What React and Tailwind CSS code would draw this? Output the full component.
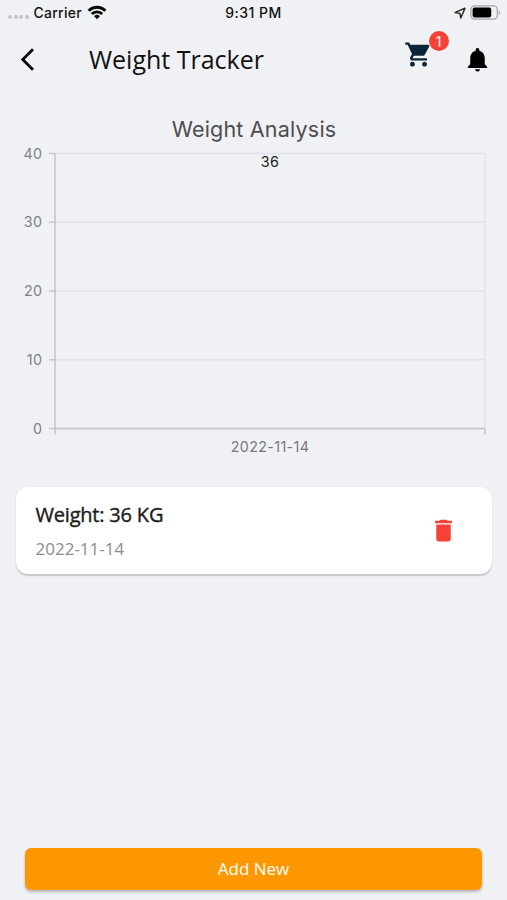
import { MdArrowBackIosNew, MdDelete, MdNotifications, MdShoppingCart } from "react-icons/md";

const entries = [{ id: 1, date: "2022-11-14", weight: 36 }];
const cartCount = 1;

function StatusBar() {
  return (
    <div className="grid h-[25px] grid-cols-3 items-center font-['Inter',sans-serif] text-[14px] font-medium text-[#111]">
      <div className="flex items-center pl-2">
        <div className="mt-2 flex gap-[1.5px]">
          {[0, 1, 2, 3].map((dot) => (
            <span key={dot} className="h-[4px] w-[4px] rounded-full bg-[#c3c4c7]" />
          ))}
        </div>
        <span className="ml-[5px] tracking-[0.25px]">Carrier</span>
        <svg className="ml-[5px] h-[15px] w-5" viewBox="0 0 20 15" fill="none" stroke="#0a0a0a" strokeWidth="2.9">
          <path d="M1.6 5.7a12 12 0 0 1 16.8 0" />
          <path d="M4.8 9a7.4 7.4 0 0 1 10.4 0" />
          <path d="M10 14.2 7.1 11.3a4.1 4.1 0 0 1 5.8 0z" fill="#0a0a0a" stroke="none" />
        </svg>
      </div>
      <div className="text-center tracking-[0.45px]">9:31 PM</div>
      <div className="flex items-center justify-end pr-[6px]">
        <svg className="h-3 w-3" viewBox="0 0 12 12" fill="none" stroke="#222" strokeWidth="1.4" strokeLinejoin="round">
          <path d="M1 5.6 11 1.2 6.8 11 5.9 6.4z" />
        </svg>
        <svg className="ml-1 h-[15px] w-[31px]" viewBox="0 0 31 15">
          <rect x="0.9" y="0.9" width="26.4" height="13.2" rx="3.6" fill="none" stroke="#a5a6a9" strokeWidth="1.3" />
          <rect x="2.6" y="2.6" width="18.6" height="9.8" rx="1.8" fill="#000" />
          <path d="M28.8 5.2c1.8.7 1.8 3.9 0 4.6z" fill="#a5a6a9" />
        </svg>
      </div>
    </div>
  );
}

function Header() {
  return (
    <header className="flex h-[69px] items-center pr-[15px] pl-[14px]">
      <button>
        <MdArrowBackIosNew className="h-[27px] w-[27px] text-[#0a0a0a]" />
      </button>
      <h1 className="mt-px ml-[48px] font-['Open_Sans',sans-serif] text-[25px] text-[#111]">Weight Tracker</h1>
      <button className="relative ml-auto">
        <MdShoppingCart className="-mt-[10px] h-[29px] w-[29px] text-[#0c2338]" />
        <span className="absolute -top-[19px] left-[24.5px] flex h-5 w-5 items-center justify-center rounded-full bg-[#f44336] font-['Inter',sans-serif] text-[14px] text-white">
          {cartCount}
        </span>
      </button>
      <button className="ml-[30px]">
        <MdNotifications className="h-[29px] w-[29px] text-black" />
      </button>
    </header>
  );
}

function WeightChart({ data }) {
  const left = 55;
  const right = 485;
  const top = 59.5;
  const bottom = 334.5;
  const max = 40;
  const y = (value) => bottom - (value / max) * (bottom - top);
  const step = (right - left) / data.length;

  return (
    <svg className="block h-[376px] w-full font-['Inter',sans-serif]" viewBox="0 0 507 376">
      <text x="254" y="42.5" textAnchor="middle" fontSize="21.5" letterSpacing="0.2" fill="#4d4d50">
        Weight Analysis
      </text>
      {[0, 10, 20, 30, 40].map((tick) => (
        <g key={tick}>
          <line x1={left} x2={right} y1={y(tick)} y2={y(tick)} stroke="#e2e3e6" strokeWidth="1.3" />
          <line x1={left - 6} x2={left} y1={y(tick)} y2={y(tick)} stroke="#c4c5c9" strokeWidth="1.4" />
          <text x="42.3" y={y(tick) + 5} textAnchor="end" fontSize="14.3" letterSpacing="0.3" fill="#808184">
            {tick}
          </text>
        </g>
      ))}
      <line x1={right} x2={right} y1={top} y2={bottom} stroke="#e2e3e6" strokeWidth="1.3" />
      <line x1={left} x2={left} y1={top} y2={bottom + 6} stroke="#c4c5c9" strokeWidth="1.5" />
      <line x1={left} x2={right} y1={bottom} y2={bottom} stroke="#c4c5c9" strokeWidth="1.6" />
      <line x1={right} x2={right} y1={bottom} y2={bottom + 6} stroke="#c4c5c9" strokeWidth="1.5" />
      {data.map((entry, i) => (
        <g key={entry.id} textAnchor="middle" fontSize="14.3" letterSpacing="0.35">
          <text x={left + step * (i + 0.5)} y="73" fill="#222">
            {entry.weight}
          </text>
          <text x={left + step * (i + 0.5)} y="358" fill="#77787b">
            {entry.date}
          </text>
        </g>
      ))}
    </svg>
  );
}

function WeightCard({ entry }) {
  return (
    <div className="flex h-[87px] items-center justify-between rounded-[12px] bg-white pr-[34px] pl-[20px] font-['Open_Sans',sans-serif] shadow-[0_1.5px_1.5px_rgba(0,0,0,0.18)]">
      <div>
        <p className="text-[20px] leading-[28px] font-normal tracking-[-0.2px] text-[#1c1c1c] [-webkit-text-stroke:0.4px_#1c1c1c]">
          Weight: {entry.weight} KG
        </p>
        <p className="mt-[8px] text-[17px] leading-[23px] text-[#8d8d8d]">{entry.date}</p>
      </div>
      <button>
        <MdDelete className="h-[29px] w-[29px] text-[#f44336]" />
      </button>
    </div>
  );
}

export default function App() {
  return (
    <div className="flex h-[900px] w-full flex-col overflow-hidden bg-[#f0f1f5]">
      <StatusBar />
      <Header />
      <WeightChart data={entries} />
      <main className="flex-1 px-[15.5px] pt-[17px]">
        {entries.map((entry) => (
          <WeightCard key={entry.id} entry={entry} />
        ))}
      </main>
      <footer className="px-[25px] pb-[10px]">
        <button className="h-[42px] w-full rounded-[6px] bg-[#ff9800] font-['Open_Sans',sans-serif] text-[17px] font-medium text-white shadow-[0_2px_3px_rgba(0,0,0,0.25)]">
          Add New
        </button>
      </footer>
    </div>
  );
}
